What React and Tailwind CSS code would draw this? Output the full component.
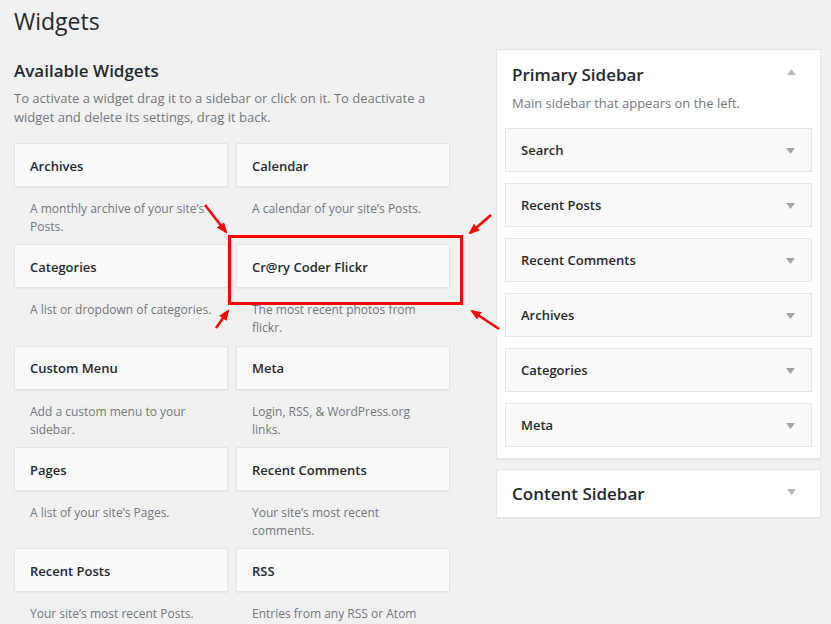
const AVAILABLE = [
  { title: 'Archives', desc: 'A monthly archive of your site’s Posts.' },
  { title: 'Calendar', desc: 'A calendar of your site’s Posts.' },
  { title: 'Categories', desc: 'A list or dropdown of categories.' },
  { title: 'Cr@ry Coder Flickr', desc: 'The most recent photos from flickr.' },
  { title: 'Custom Menu', desc: 'Add a custom menu to your sidebar.' },
  { title: 'Meta', desc: 'Login, RSS, & WordPress.org links.' },
  { title: 'Pages', desc: 'A list of your site’s Pages.' },
  { title: 'Recent Comments', desc: 'Your site’s most recent comments.' },
  { title: 'Recent Posts', desc: 'Your site’s most recent Posts.' },
  { title: 'RSS', desc: 'Entries from any RSS or Atom feed.' },
]

const PRIMARY = ['Search', 'Recent Posts', 'Recent Comments', 'Archives', 'Categories', 'Meta']

function Caret({ up, className = '' }) {
  return (
    <svg width="9" height="6" viewBox="0 0 9 6" className={className}>
      {up ? <path d="M0 6 L4.5 0 L9 6 Z" fill="currentColor" /> : <path d="M0 0 L9 0 L4.5 6 Z" fill="currentColor" />}
    </svg>
  )
}

function Arrow({ x1, y1, x2, y2 }) {
  return <line x1={x1} y1={y1} x2={x2} y2={y2} stroke="#ff0000" strokeWidth="2.5" markerEnd="url(#head)" />
}

export default function App() {
  return (
    <div
      className="relative w-[831px] h-[624px] overflow-hidden bg-[#f1f1f1] text-[#23282d]"
      style={{ fontFamily: '"Open Sans", "Noto Sans", sans-serif' }}
    >
      <div className="flex">
        {/* Available widgets */}
        <div className="ml-[14px] w-[436px]">
          <h1 className="pt-[7px] text-[23px] leading-[29px] font-normal">Widgets</h1>
          <h2 className="mt-[23px] text-[17px] leading-[24px] font-semibold">Available Widgets</h2>
          <p className="mt-[6px] text-[13px] leading-[19px] text-[#72777c]">
            To activate a widget drag it to a sidebar or click on it. To deactivate a widget and delete its settings, drag it back.
          </p>

          <div className="mt-[16px] grid grid-cols-2 gap-x-[8px]">
            {AVAILABLE.map((w) => (
              <div key={w.title} className="h-[101.25px]">
                <div className="flex h-[44px] items-center border border-[#e5e5e5] bg-[#fafafa] pl-[15px] pt-[3px] text-[13px] font-semibold shadow-[0_1px_1px_rgba(0,0,0,0.04)]">
                  {w.title}
                </div>
                <p className="mt-[13px] w-[184px] pl-[16px] box-content text-[12px] leading-[18px] text-[#72777c]">{w.desc}</p>
              </div>
            ))}
          </div>
        </div>

        {/* Sidebars */}
        <div className="ml-[46px] mt-[49px] w-[325px]">
          <div className="border border-[#e5e5e5] bg-white shadow-[0_1px_1px_rgba(0,0,0,0.04)]">
            <div className="flex items-start justify-between px-[15px] pt-[13px]">
              <h3 className="text-[17px] leading-[24px] font-semibold">Primary Sidebar</h3>
              <Caret up className="mt-[6px] mr-[9px] text-[#b4b9be]" />
            </div>
            <p className="mt-[7px] px-[15px] text-[13px] leading-[19px] text-[#72777c]">Main sidebar that appears on the left.</p>
            <div className="mt-[15px] flex flex-col gap-[11px] px-[8px] pb-[11px]">
              {PRIMARY.map((t) => (
                <div key={t} className="flex h-[44px] items-center justify-between border border-[#e5e5e5] bg-[#fafafa] pl-[15px] pr-[16px] pt-[2px] text-[13px] font-semibold">
                  <span>{t}</span>
                  <Caret className="text-[#a0a5aa]" />
                </div>
              ))}
            </div>
          </div>

          <div className="mt-[10px] border border-[#e5e5e5] bg-white pb-[11px] shadow-[0_1px_1px_rgba(0,0,0,0.04)]">
            <div className="flex items-start justify-between px-[15px] pt-[12px]">
              <h3 className="text-[17px] leading-[24px] font-semibold">Content Sidebar</h3>
              <Caret className="mt-[7px] mr-[9px] text-[#b4b9be]" />
            </div>
          </div>
        </div>
      </div>

      {/* annotations */}
      <div className="absolute left-[228px] top-[235px] h-[70px] w-[235px] border-[3px] border-[#ff0000]" />
      <svg className="pointer-events-none absolute inset-0" width="831" height="624">
        <defs>
          <marker id="head" markerWidth="4.4" markerHeight="3.6" refX="3.6" refY="1.8" orient="auto" markerUnits="strokeWidth">
            <path d="M0 0 L4.4 1.8 L0 3.6 Z" fill="#ff0000" />
          </marker>
        </defs>
        <Arrow x1={205} y1={205} x2={226} y2={232} />
        <Arrow x1={216} y1={328} x2={228} y2={311} />
        <Arrow x1={491} y1={215} x2={470} y2={233} />
        <Arrow x1={499} y1={329} x2={472} y2={311} />
      </svg>
    </div>
  )
}
